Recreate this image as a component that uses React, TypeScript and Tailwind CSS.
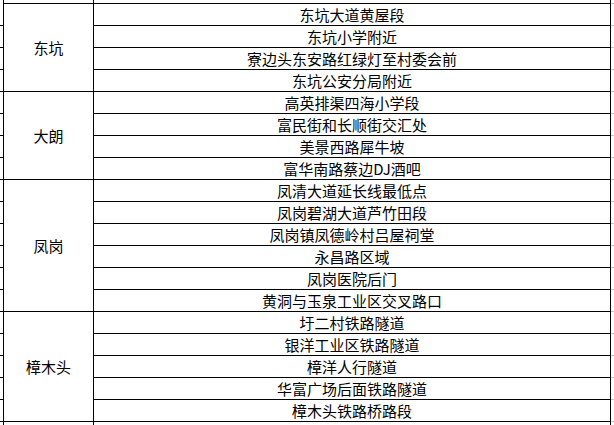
const groups: { name: string; places: string[] }[] = [
  {
    name: "东坑",
    places: ["东坑大道黄屋段", "东坑小学附近", "寮边头东安路红绿灯至村委会前", "东坑公安分局附近"],
  },
  {
    name: "大朗",
    places: ["高英排渠四海小学段", "富民街和长顺街交汇处", "美景西路犀牛坡", "富华南路蔡边DJ酒吧"],
  },
  {
    name: "凤岗",
    places: [
      "凤清大道延长线最低点",
      "凤岗碧湖大道芦竹田段",
      "凤岗镇凤德岭村吕屋祠堂",
      "永昌路区域",
      "凤岗医院后门",
      "黄洞与玉泉工业区交叉路口",
    ],
  },
  {
    name: "樟木头",
    places: ["圩二村铁路隧道", "银洋工业区铁路隧道", "樟洋人行隧道", "华富广场后面铁路隧道", "樟木头铁路桥路段"],
  },
];

const allPlaces = groups.flatMap((g) => g.places);

export default function App() {
  return (
    <div
      className="flex h-[425px] w-[614px] overflow-hidden bg-white text-[15px] text-black"
      style={{ fontFamily: '"Noto Sans CJK SC", "Noto Sans", sans-serif' }}
    >
      {/* left gridline stubs */}
      <div className="flex w-[3px] flex-col pt-[4px]">
        {allPlaces.map((p) => (
          <div key={p} className="h-[22px] shrink-0 border-b border-black" />
        ))}
      </div>
      <div className="w-px bg-black" />

      {/* district column */}
      <div className="flex w-[89px] flex-col pt-[3px]">
        <div className="h-px shrink-0 bg-black" />
        {groups.map((g) => (
          <div
            key={g.name}
            className="flex shrink-0 items-center justify-center border-b border-black leading-none"
            style={{ height: g.places.length * 22 }}
          >
            {g.name}
          </div>
        ))}
      </div>
      <div className="w-px bg-black" />

      {/* place column */}
      <div className="flex w-[516px] flex-col pt-[3px]">
        <div className="h-px shrink-0 bg-black" />
        {allPlaces.map((p) => (
          <div
            key={p}
            className="flex h-[22px] shrink-0 items-center justify-center border-b border-black leading-none"
          >
            {p}
          </div>
        ))}
      </div>
      <div className="w-px bg-black" />

      {/* right gridline stubs */}
      <div className="flex w-[3px] flex-col pt-[3px]">
        <div className="h-px shrink-0 bg-[#c8c8c8]" />
        {allPlaces.map((p) => (
          <div key={p} className="h-[22px] shrink-0 border-b border-[#c8c8c8]" />
        ))}
      </div>
    </div>
  );
}
